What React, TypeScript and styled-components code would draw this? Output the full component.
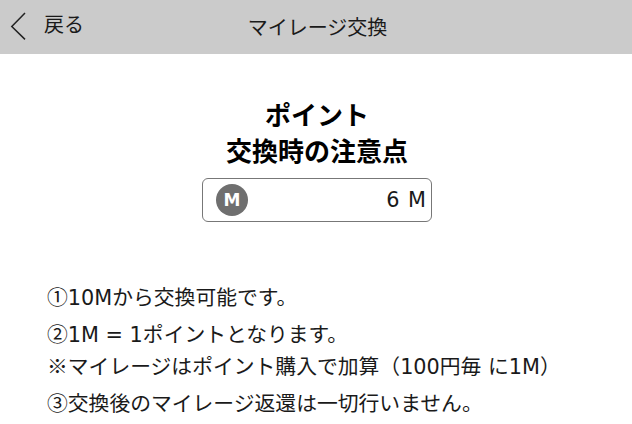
import React from "react";
import styled, { createGlobalStyle } from "styled-components";

const GlobalStyle = createGlobalStyle`
  html, body {
    margin: 0;
    padding: 0;
    background: #fff;
    color: #1a1a1a;
    font-family: "DejaVu Sans", "Noto Sans CJK JP", sans-serif;
  }
`;

const App = () => {
  return (
    <SPage>
      <GlobalStyle />
      <SHeader>
        <SBack>
          <svg width="18" height="30" viewBox="0 0 18 30">
            <path d="M15 2 L1.8 15.6 L15 28.4" fill="none" stroke="#222" strokeWidth="1.5" />
          </svg>
          <SBackLabel>戻る</SBackLabel>
        </SBack>
        <STitle>マイレージ交換</STitle>
      </SHeader>
      <SMain>
        <SHeading>
          <SHeadingLine>ポイント</SHeadingLine>
          <SHeadingLine>交換時の注意点</SHeadingLine>
        </SHeading>
        <SBalance>
          <SBadge>M</SBadge>
          <SAmount>6 M</SAmount>
        </SBalance>
        <SNotes>
          <SNote><SMark>①</SMark>10Mから交換可能です。</SNote>
          <SNote><SMark>②</SMark>1M = 1ポイントとなります。</SNote>
          <SSubNote><SMark>※</SMark>マイレージはポイント購入で加算（100円毎 に1M）</SSubNote>
          <SNote><SMark>③</SMark>交換後のマイレージ返還は一切行いません。</SNote>
        </SNotes>
      </SMain>
    </SPage>
  );
};

const SPage = styled.div`
  width: 632px;
  height: 424px;
  overflow: hidden;
`;

const SHeader = styled.header`
  position: relative;
  display: flex;
  align-items: center;
  justify-content: center;
  height: 54px;
  background-color: #cbcbcb;
`;

const SBack = styled.div`
  position: absolute;
  left: 10px;
  top: 11px;
  display: flex;
  align-items: center;
  gap: 16px;
`;

const SBackLabel = styled.span`
  font-size: 20px;
  line-height: 30px;
  margin-top: -2px;
`;

const STitle = styled.h1`
  margin: -2px 0 0 3px;
  font-size: 20px;
  font-weight: 400;
`;

const SMain = styled.main`
  display: flex;
  flex-direction: column;
  align-items: center;
`;

const SHeading = styled.div`
  display: flex;
  flex-direction: column;
  align-items: center;
  padding: 44px 0 0 2px;
  color: #000;
`;

const SHeadingLine = styled.h2`
  margin: 0;
  font-size: 26px;
  font-weight: 700;
  line-height: 36px;
`;

const SBalance = styled.div`
  display: flex;
  align-items: center;
  justify-content: space-between;
  box-sizing: border-box;
  width: 230px;
  height: 44px;
  margin: 8px 0 0 2px;
  padding: 0 5px 0 13px;
  border: 1px solid #777;
  border-radius: 6px;
`;

const SBadge = styled.span`
  display: flex;
  align-items: center;
  justify-content: center;
  width: 32px;
  height: 32px;
  border-radius: 50%;
  background-color: #6f6f6f;
  color: #fff;
  font-size: 17px;
  font-weight: 700;
`;

const SAmount = styled.span`
  font-size: 20.8px;
  word-spacing: 2px;
`;

const SNotes = styled.div`
  align-self: stretch;
  padding: 61px 0 0 47px;
  font-size: 20.8px;
`;

const SNote = styled.p`
  margin: 0 0 7px;
  line-height: 30px;
  white-space: nowrap;
`;

const SSubNote = styled(SNote)`
  margin-top: -5px;
`;

const SMark = styled.span`
  font-family: "Noto Sans CJK JP", sans-serif;
  line-height: 1;
`;

export default App;
